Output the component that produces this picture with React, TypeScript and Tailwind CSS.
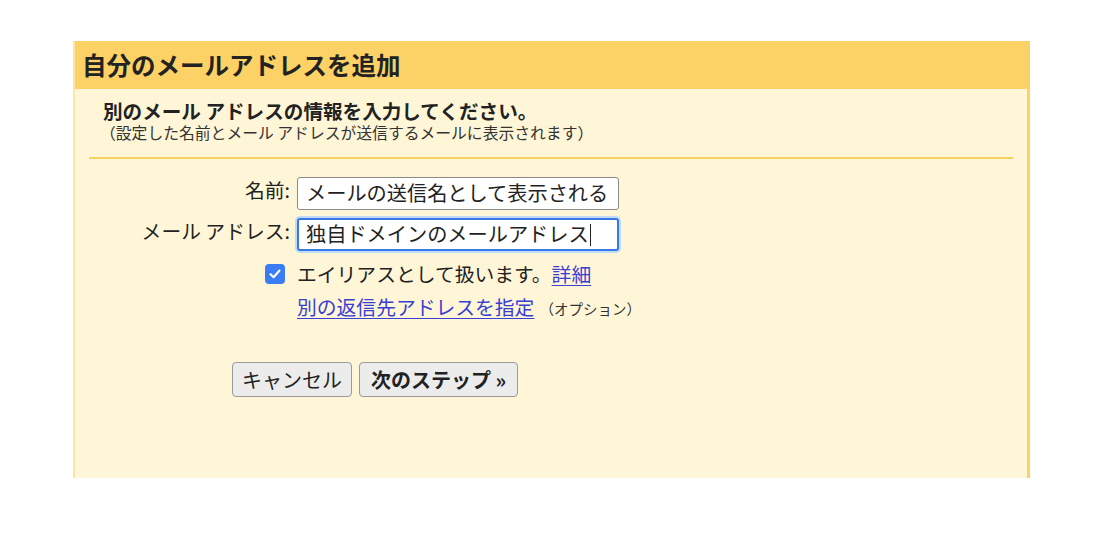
import React from 'react';

const font = { fontFamily: '"Noto Sans CJK JP", "Noto Sans", sans-serif' };

export default function App() {
  return (
    <div className="w-[1100px] h-[550px] bg-white pt-[41px] pl-[73px]" style={font}>
      <div className="w-[957px] border-l-2 border-r-[3px] border-l-[#fbe6a6] border-r-[#f8d26a]">
        {/* Header */}
        <div className="h-[48px] bg-[#fcd165] pl-[7px] flex items-center">
          <h1 className="text-[24.5px] font-bold text-[#222] leading-none">自分のメールアドレスを追加</h1>
        </div>

        {/* Body */}
        <div className="h-[389px] bg-[#fff6d8] pt-[9px]">
          <p className="pl-[28px] text-[19.6px] leading-[25px] font-bold text-[#222]">
            別のメール アドレスの情報を入力してください。
          </p>
          <p className="pl-[25px] text-[15.8px] leading-[19px] text-[#333]">
            （設定した名前とメール アドレスが送信するメールに表示されます）
          </p>

          <div className="mx-[14px] mt-[15px] h-[2px] bg-[#f7cf62]" />

          <div className="mt-[18px] grid grid-cols-[215px_auto] gap-x-[7px] text-[#222]">
            <label className="text-right text-[19.8px] leading-[28px] self-center -mt-[8px]">名前:</label>
            <div className="w-[322px] h-[33px] bg-white border border-[#8a8a8a] rounded-[3px] pl-[8px] flex items-center text-[20.2px] leading-none overflow-hidden whitespace-nowrap">
              メールの送信名として表示される
            </div>

            <label className="mt-[8px] text-right text-[19.8px] leading-[28px] self-center -translate-y-[4px]">
              メール アドレス:
            </label>
            <div className="mt-[8px] w-[322px] h-[33px] bg-white border-2 border-[#3a78e8] rounded-[3px] pl-[7px] flex items-center text-[20.2px] leading-none shadow-[0_0_0_2px_#bfdcf3] whitespace-nowrap">
              独自ドメインのメールアドレス
              <span className="inline-block w-px h-[22px] bg-[#222] ml-[1px]" />
            </div>

            <div className="mt-[9px] flex justify-end items-center pr-[5px]">
              <span className="w-[20px] h-[20px] rounded-[4px] bg-[#3a7cf4] flex items-center justify-center">
                <svg width="14" height="14" viewBox="0 0 14 14" fill="none">
                  <path d="M2.5 7.3 L5.6 10.2 L11.5 3.6" stroke="white" strokeWidth="2.2" strokeLinecap="round" strokeLinejoin="round" />
                </svg>
              </span>
            </div>
            <div className="mt-[9px] text-[19.8px] leading-[28px]">
              エイリアスとして扱います。<a className="text-[#3a3fd4] underline underline-offset-[3px] cursor-pointer">詳細</a>
            </div>

            <div />
            <div className="mt-[5px] leading-[28px] flex items-baseline">
              <a className="text-[19.8px] text-[#3a3fd4] underline underline-offset-[3px] cursor-pointer">
                別の返信先アドレスを指定
              </a>
              <span className="ml-[5px] text-[14.5px] text-[#333]">（オプション）</span>
            </div>
          </div>

          <div className="mt-[39px] pl-[157px] flex gap-[7px]">
            <button className="w-[120px] h-[35px] bg-[#ececec] border border-[#9a9a9a] rounded-[4px] text-[20px] text-[#222] leading-none">
              キャンセル
            </button>
            <button className="w-[159px] h-[35px] bg-[#ececec] border border-[#9a9a9a] rounded-[4px] text-[20px] font-bold text-[#222] leading-none">
              次のステップ »
            </button>
          </div>
        </div>
      </div>
    </div>
  );
}
